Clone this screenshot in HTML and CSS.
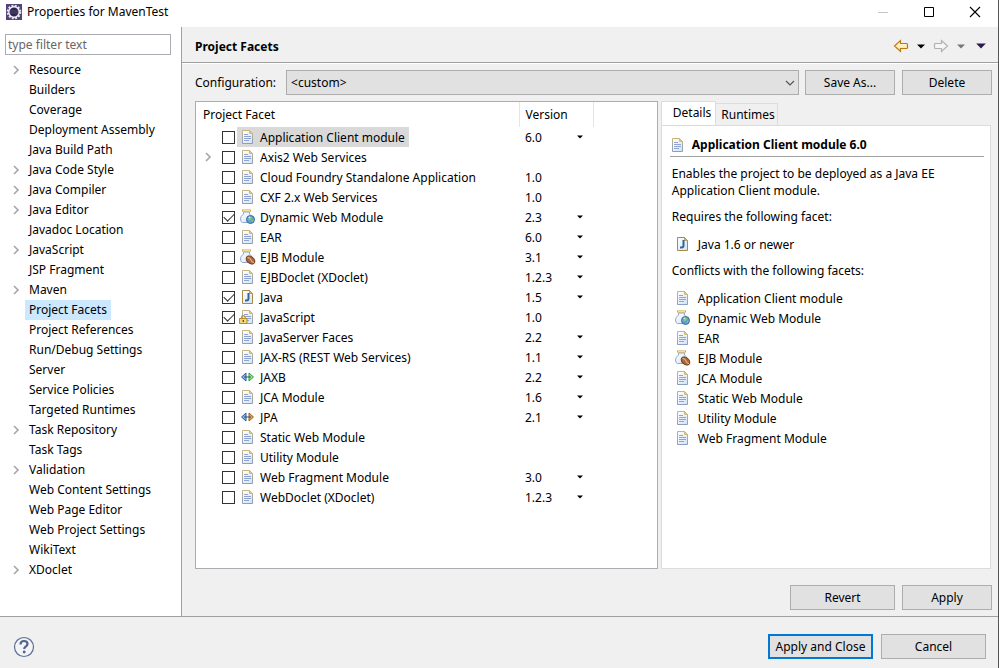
FILE: index.html
```html
<!DOCTYPE html>
<html lang="en">
<head>
  <meta charset="UTF-8" />
  <meta name="viewport" content="width=device-width, initial-scale=1.0"/>
  <title>Properties for MavenTest</title>
  <link rel="stylesheet" href="styles.css">
</head>
<body>
  <svg class="sprite" width="0" height="0">
    <defs>
      <linearGradient id="paper" x1="0" y1="0" x2="1" y2="1">
        <stop offset="0" stop-color="#ffffff"/>
        <stop offset="1" stop-color="#d3e2f6"/>
      </linearGradient>
      <linearGradient id="edge" x1="0" y1="0" x2="0" y2="1">
        <stop offset="0" stop-color="#c9b57c"/>
        <stop offset="1" stop-color="#8c9dc4"/>
      </linearGradient>
      <linearGradient id="gold" x1="0" y1="0" x2="0" y2="1">
        <stop offset="0" stop-color="#fffdf0"/>
        <stop offset="1" stop-color="#fbe08a"/>
      </linearGradient>
    </defs>
    <symbol id="doc" viewBox="0 0 16 16">
      <path d="M2.5 1.5h7l3 3v10h-10z" fill="url(#paper)" stroke="url(#edge)"/>
      <path d="M9.500 1.500v3h3z" fill="#e3c57f" stroke="#c9ae6c" stroke-width=".7"/>
      <path d="M4 5.500h4M4 7.500h7M4 9.500h7M4 11.500h5" stroke="#8fa3cf"/>
    </symbol>
    <symbol id="java" viewBox="0 0 16 16">
      <path d="M2.5 1.500h7l3 3v10h-10z" fill="url(#paper)" stroke="#a68a45"/>
      <path d="M9.500 1.500v3h3z" fill="#e3bd63" stroke="#a68a45" stroke-width=".7"/>
      <path d="M8.500 4v5.500q0 2-2 2h-1.500" fill="none" stroke="#2f6797" stroke-width="2"/>
    </symbol>
    <symbol id="jar" viewBox="0 0 16 16">
      <path d="M3.500 3v2q-3 2-3 5 0 3 2 3.500h7q2.500-1 2.500-4 0-3-2.500-4.500v-2z" fill="url(#paper)" stroke="#8fa9cf"/>
      <path d="M2 1.500h9" stroke="#d1a33c" stroke-width="2"/>
      <path d="M3 1.500h7" stroke="#ffefb0" stroke-width=".8"/>
    </symbol>
    <symbol id="web" viewBox="0 0 16 16">
      <use href="#jar"/>
      <circle cx="10.500" cy="10.500" r="4" fill="#5da0cf" stroke="#3a6f9f"/>
      <path d="M9 7.500l3 .5-1 2.500-2.500 1zM11.500 11.500l2-1-.5 2.500z" fill="#8bcf7c"/>
      <path d="M8.500 8.500l1.500-.5" stroke="#e9f7ff"/>
    </symbol>
    <symbol id="ejb" viewBox="0 0 16 16">
      <use href="#jar"/>
      <ellipse cx="10.500" cy="11" rx="4.800" ry="3.300" transform="rotate(38 10.500 11)" fill="#a9683c" stroke="#6e3b1c"/>
      <path d="M7.500 8.500q3 0 3.500 2.500t3 2.500" fill="none" stroke="#f0c39a"/>
    </symbol>
    <symbol id="js" viewBox="0 0 16 16" overflow="visible">
      <use href="#doc"/>
      <path d="M1.500 10V8.500a1.800 1.800 0 0 1 3.600 0V10" fill="none" stroke="#b8963c" stroke-width="1.200"/>
      <path d="M-.5 9.500h7.500v5h-7.500z" fill="#f0d680" stroke="#b38d33"/>
      <path d="M3.300 11v2" stroke="#6d4c0c" stroke-width="1.300"/>
    </symbol>
    <symbol id="jaxb" viewBox="0 0 16 16">
      <path d="M6 4v8L1.500 8z" fill="#8fb4e8" stroke="#2d5c9a"/>
      <path d="M9 4v8l4.500-4z" fill="#8ff07f" stroke="#2a9c3a"/>
      <path d="M4 8h7" stroke="#33506f"/>
    </symbol>
    <symbol id="jpa" viewBox="0 0 16 16">
      <path d="M6 4v8L1.500 8z" fill="#8fb4e8" stroke="#2d5c9a"/>
      <path d="M9 4v8l4.500-4z" fill="#dfa24c" stroke="#a0641c"/>
      <path d="M4 8h7" stroke="#33506f"/>
    </symbol>
    <symbol id="chevron" viewBox="0 0 8 10">
      <path d="M2 1l4 4-4 4" fill="none" stroke="#a6a6a6" stroke-width="1.600"/>
    </symbol>
    <symbol id="down" viewBox="0 0 8 5">
      <path d="M0 .5h8L4 4.500z" fill="currentColor"/>
    </symbol>
  </svg>

  <div class="window">
    <header class="titlebar">
      <svg class="logo" viewBox="0 0 16 16">
        <rect width="16" height="16" fill="#54427a"/>
        <circle cx="8" cy="8" r="6.300" fill="none" stroke="#e8e6ee" stroke-width="2" stroke-dasharray="1.900 1.400"/>
        <circle cx="8" cy="8" r="5.200" fill="#2f2748" stroke="#f2f0f6" stroke-width="1.400"/>
        <path d="M4 7h8M4 9h8" stroke="#51447a"/>
      </svg>
      <h1>Properties for MavenTest</h1>
      <div class="window-buttons">
        <button aria-label="Minimize"><svg viewBox="0 0 12 12"><path d="M1 6.500h10" stroke="#c4c4c4"/></svg></button>
        <button aria-label="Maximize"><svg viewBox="0 0 12 12"><path d="M1.500 1.500h9v9h-9z" fill="none" stroke="#000"/></svg></button>
        <button aria-label="Close"><svg viewBox="0 0 12 12"><path d="M1 1l10 10M11 1L1 11" stroke="#000" stroke-width="1.100"/></svg></button>
      </div>
    </header>

    <div class="content">
      <nav class="sidebar">
        <input class="filter" type="text" placeholder="type filter text" aria-label="Filter"/>
        <ul class="tree" id="tree"></ul>
      </nav>

      <main class="page">
        <div class="page-header">
          <h2>Project Facets</h2>
          <div class="history">
            <button aria-label="Back"><svg class="arrow" viewBox="0 0 16 14"><path d="M1.500 7l6-5.500v3h6q1 0 1 1v3q0 1-1 1h-6v3z" fill="url(#gold)" stroke="#b97a14" stroke-width="1.200"/></svg></button>
            <button aria-label="Back history"><svg class="caret"><use href="#down"/></svg></button>
            <button aria-label="Forward"><svg class="arrow" viewBox="0 0 16 14"><path d="M14.500 7l-6-5.500v3h-6q-1 0-1 1v3q0 1 1 1h6v3z" fill="#f5f5f5" stroke="#b0b0b0" stroke-width="1.200"/></svg></button>
            <button class="dim" aria-label="Forward history"><svg class="caret"><use href="#down"/></svg></button>
            <button class="menu" aria-label="View menu"><svg class="caret"><use href="#down"/></svg></button>
          </div>
        </div>

        <div class="page-body">
          <div class="config">
            <label for="configuration">Configuration:</label>
            <div class="select">
              <select id="configuration"><option>&lt;custom&gt;</option></select>
              <svg viewBox="0 0 10 6"><path d="M1 1l4 4 4-4" fill="none" stroke="#555" stroke-width="1.200"/></svg>
            </div>
            <div class="config-buttons">
              <button class="btn">Save As...</button>
              <button class="btn">Delete</button>
            </div>
          </div>

          <div class="panels">
            <div class="facets">
              <table>
                <thead>
                  <tr><th class="col-name">Project Facet</th><th class="col-version">Version</th><th></th></tr>
                </thead>
                <tbody id="facets"></tbody>
              </table>
            </div>

            <div class="details">
              <div class="tabs" role="tablist">
                <button class="tab active" role="tab" aria-selected="true">Details</button>
                <button class="tab" role="tab" aria-selected="false">Runtimes</button>
              </div>
              <div class="tab-content">
                <h3><svg class="icon"><use href="#doc"/></svg>Application Client module 6.0</h3>
                <p>Enables the project to be deployed as a Java EE Application Client module.</p>
                <p>Requires the following facet:</p>
                <ul class="facet-list" id="requires"></ul>
                <p>Conflicts with the following facets:</p>
                <ul class="facet-list" id="conflicts"></ul>
              </div>
            </div>
          </div>

          <div class="actions">
            <button class="btn medium">Revert</button>
            <button class="btn">Apply</button>
          </div>
        </div>
      </main>
    </div>

    <footer class="footer">
      <button class="help" aria-label="Help">
        <svg viewBox="0 0 22 22">
          <circle cx="11" cy="11" r="9.500" fill="#f2f4f8" stroke="#5d6f93" stroke-width="1.200"/>
          <path d="M7.500 8.500q0-3.500 3.500-3.500t3.500 3q0 1.500-2 2.700-1.300.8-1.300 2.300" fill="none" stroke="#53658c" stroke-width="2.200"/>
          <circle cx="11.200" cy="16" r="1.400" fill="#53658c"/>
        </svg>
      </button>
      <button class="btn medium primary">Apply and Close</button>
      <button class="btn medium">Cancel</button>
    </footer>
  </div>

  <script>
    // + marks an item that can be expanded
    const pages = [
      '+Resource', 'Builders', 'Coverage', 'Deployment Assembly', 'Java Build Path',
      '+Java Code Style', '+Java Compiler', '+Java Editor', 'Javadoc Location',
      '+JavaScript', 'JSP Fragment', '+Maven', 'Project Facets', 'Project References',
      'Run/Debug Settings', 'Server', 'Service Policies', 'Targeted Runtimes',
      '+Task Repository', 'Task Tags', '+Validation', 'Web Content Settings',
      'Web Page Editor', 'Web Project Settings', 'WikiText', '+XDoclet'
    ];

    const facets = [
      { name: 'Application Client module', version: '6.0', menu: true, selected: true },
      { name: 'Axis2 Web Services', expand: true },
      { name: 'Cloud Foundry Standalone Application', version: '1.0' },
      { name: 'CXF 2.x Web Services', version: '1.0' },
      { name: 'Dynamic Web Module', version: '2.3', menu: true, checked: true, icon: 'web' },
      { name: 'EAR', version: '6.0', menu: true },
      { name: 'EJB Module', version: '3.1', menu: true, icon: 'ejb' },
      { name: 'EJBDoclet (XDoclet)', version: '1.2.3', menu: true },
      { name: 'Java', version: '1.5', menu: true, checked: true, icon: 'java' },
      { name: 'JavaScript', version: '1.0', checked: true, icon: 'js' },
      { name: 'JavaServer Faces', version: '2.2', menu: true },
      { name: 'JAX-RS (REST Web Services)', version: '1.1', menu: true },
      { name: 'JAXB', version: '2.2', menu: true, icon: 'jaxb' },
      { name: 'JCA Module', version: '1.6', menu: true },
      { name: 'JPA', version: '2.1', menu: true, icon: 'jpa' },
      { name: 'Static Web Module' },
      { name: 'Utility Module' },
      { name: 'Web Fragment Module', version: '3.0', menu: true },
      { name: 'WebDoclet (XDoclet)', version: '1.2.3', menu: true }
    ];

    const requires = [{ name: 'Java 1.6 or newer', icon: 'java' }];

    const conflicts = [
      { name: 'Application Client module' },
      { name: 'Dynamic Web Module', icon: 'web' },
      { name: 'EAR' },
      { name: 'EJB Module', icon: 'ejb' },
      { name: 'JCA Module' },
      { name: 'Static Web Module' },
      { name: 'Utility Module' },
      { name: 'Web Fragment Module' }
    ];

    const icon = name => `<svg class="icon"><use href="#${name || 'doc'}"/></svg>`;
    const chevron = show => `<span class="expander">${show ? '<svg><use href="#chevron"/></svg>' : ''}</span>`;

    document.getElementById('tree').innerHTML = pages.map(page => {
      const name = page.replace('+', '');
      const active = name === 'Project Facets' ? 'active' : '';
      return `<li>${chevron(page[0] === '+')}<a href="#" class="${active}">${name}</a></li>`;
    }).join('');

    document.getElementById('facets').innerHTML = facets.map((f, i) => `
      <tr>
        <td>
          <div class="facet">
            ${chevron(f.expand)}
            <input type="checkbox" id="facet-${i}" ${f.checked ? 'checked' : ''}/>
            <label for="facet-${i}" class="${f.selected ? 'selected' : ''}">${icon(f.icon)}${f.name}</label>
          </div>
        </td>
        <td>
          <div class="version">
            <span>${f.version || ''}</span>
            ${f.menu ? `<button aria-label="Change version"><svg><use href="#down"/></svg></button>` : ''}
          </div>
        </td>
        <td></td>
      </tr>
    `).join('');

    const listItems = list => list.map(f => `<li>${icon(f.icon)}${f.name}</li>`).join('');
    document.getElementById('requires').innerHTML = listItems(requires);
    document.getElementById('conflicts').innerHTML = listItems(conflicts);
  </script>
</body>
</html>
```

FILE: styles.css
```css
* {
  margin: 0;
  padding: 0;
  box-sizing: border-box;
}
body {
  background: #f0f0f0;
  color: #000;
  font-family: "Noto Sans", "Open Sans", sans-serif;
  font-size: 12px;
}
button,
input,
select {
  font: inherit;
  color: inherit;
}
button {
  background: transparent;
  border: none;
}
ul {
  list-style: none;
}
svg {
  display: block;
  flex: none;
}
.sprite {
  position: absolute;
}
.icon {
  width: 16px;
  height: 16px;
  overflow: visible;
}
.window {
  display: flex;
  flex-direction: column;
  min-height: 100vh;
  border-right: 1px solid #555;
}

/* title bar */
.titlebar {
  display: flex;
  align-items: center;
  height: 27px;
  padding: 0 12px 4px 6px;
  background: #fff;
}
.titlebar h1 {
  flex: 1;
  margin-left: 5px;
  font-size: 12px;
  font-weight: normal;
}
.logo {
  width: 16px;
  height: 16px;
}
.window-buttons {
  display: flex;
  gap: 34px;
  padding-right: 5px;
}
.window-buttons svg {
  width: 12px;
  height: 12px;
}

/* sidebar */
.content {
  flex: 1;
  display: flex;
}
.sidebar {
  width: 182px;
  padding-top: 7px;
  background: #fff;
  border-right: 1px solid #a0a0a0;
}
.filter {
  display: block;
  width: 166px;
  height: 21px;
  margin: 0 0 5px 5px;
  padding: 0 2px;
  border: 1px solid #abadb3;
}
.filter::placeholder {
  color: #666;
}
.tree li {
  display: flex;
  height: 20px;
  padding-left: 12px;
}
.expander {
  display: flex;
  align-items: center;
  width: 13px;
}
.expander svg {
  width: 8px;
  height: 10px;
}
.tree a {
  padding: 0 4px;
  line-height: 20px;
  color: inherit;
  text-decoration: none;
  white-space: nowrap;
}
.tree a.active {
  background: #cce8ff;
}

/* page */
.page {
  flex: 1;
  display: flex;
  flex-direction: column;
  min-width: 0;
}
.page-header {
  display: flex;
  align-items: center;
  justify-content: space-between;
  height: 36px;
  padding: 3px 12px 0 13px;
  border-bottom: 1px solid #a0a0a0;
}
.page-header h2 {
  font-size: 12px;
}
.history {
  display: flex;
  align-items: center;
  gap: 8px;
}
.history .arrow {
  width: 16px;
  height: 14px;
}
.caret {
  width: 8px;
  height: 5px;
}
.history .dim {
  color: #777;
}
.history .menu {
  margin-left: 3px;
  color: #2b1a4d;
}
.history .menu .caret {
  width: 10px;
  height: 6px;
}
.page-body {
  flex: 1;
  display: flex;
  flex-direction: column;
  padding: 6px 6px 6px 13px;
  border-top: 1px solid #fff;
}
.config {
  display: flex;
  align-items: center;
  gap: 6px;
}
.config label {
  padding-right: 4px;
}
.config-buttons {
  display: flex;
  gap: 7px;
}
.select {
  flex: 1;
  position: relative;
}
.select select {
  display: block;
  width: 100%;
  height: 25px;
  padding: 0 4px;
  appearance: none;
  background: #e1e1e1;
  border: 1px solid #adadad;
  border-radius: 0;
}
.select svg {
  position: absolute;
  top: 10px;
  right: 4px;
  width: 10px;
  height: 6px;
  pointer-events: none;
}
.btn {
  width: 90px;
  height: 25px;
  background: #e1e1e1;
  border: 1px solid #adadad;
  white-space: nowrap;
}
.btn.medium {
  width: 105px;
}
.btn.primary {
  border: 2px solid #0078d7;
}
.btn:hover {
  background: #e5f1fb;
}
.panels {
  flex: 1;
  display: flex;
  gap: 3px;
  margin-top: 6px;
}

/* facets table */
.facets {
  flex: 60;
  background: #fff;
  border: 1px solid #abadb3;
}
.facets table {
  width: 100%;
  table-layout: fixed;
  border-collapse: collapse;
}
.facets th {
  height: 25px;
  padding-left: 6px;
  font-weight: normal;
  text-align: left;
}
.facets .col-name {
  width: 323px;
  padding-left: 7px;
  border-right: 1px solid #e5e5e5;
}
.facets .col-version {
  width: 74px;
  border-right: 1px solid #e5e5e5;
}
.facet {
  display: flex;
  align-items: center;
  height: 20px;
  padding-left: 8px;
}
.facet .expander {
  width: 18px;
}
.facet input {
  appearance: none;
  width: 13px;
  height: 13px;
  margin-right: 2px;
  background: #fff;
  border: 1px solid #333;
}
.facet input:checked::before {
  content: "";
  display: block;
  width: 9px;
  height: 5px;
  margin: 1px;
  border: solid #333;
  border-width: 0 0 1px 1px;
  transform: rotate(-45deg);
}
.facet label {
  display: flex;
  align-items: center;
  gap: 4px;
  height: 20px;
  padding: 0 4px 0 3px;
  white-space: nowrap;
}
.facet label.selected {
  background: #d9d9d9;
}
.version {
  display: flex;
  align-items: center;
  justify-content: space-between;
  height: 20px;
  padding: 0 10px 0 6px;
}
.version svg {
  width: 6px;
  height: 4px;
}

/* details */
.details {
  flex: 43;
  display: flex;
  flex-direction: column;
  margin-right: 1px;
}
.tabs {
  display: flex;
  align-items: flex-end;
}
.tab {
  height: 22px;
  padding: 0 2px 0 5px;
  border: 1px solid #dcdcdc;
  border-width: 1px 1px 0 0;
}
.tab.active {
  height: 24px;
  padding: 0 4px 2px 11px;
  background: #fff;
  border-left-width: 1px;
}
.tab-content {
  flex: 1;
  padding: 7px 6px 7px 8px;
  background: #fff;
  border: 1px solid #dcdcdc;
}
.tab-content h3 {
  display: flex;
  align-items: center;
  gap: 6px;
  height: 24px;
  border-bottom: 1px solid #a0a0a0;
  font-size: 12px;
}
.tab-content p {
  margin: 8px 0 9px;
  padding-left: 2px;
  line-height: 17px;
}
.facet-list {
  padding-left: 5px;
}
.facet-list li {
  display: flex;
  align-items: center;
  gap: 7px;
  height: 20px;
}
.actions {
  display: flex;
  justify-content: flex-end;
  gap: 7px;
  margin-top: 16px;
}

/* footer */
.footer {
  display: flex;
  align-items: center;
  gap: 8px;
  height: 52px;
  padding: 8px 12px 0 13px;
  border-top: 1px solid #a0a0a0;
}
.help {
  margin-right: auto;
}
.help svg {
  width: 22px;
  height: 22px;
}
```
